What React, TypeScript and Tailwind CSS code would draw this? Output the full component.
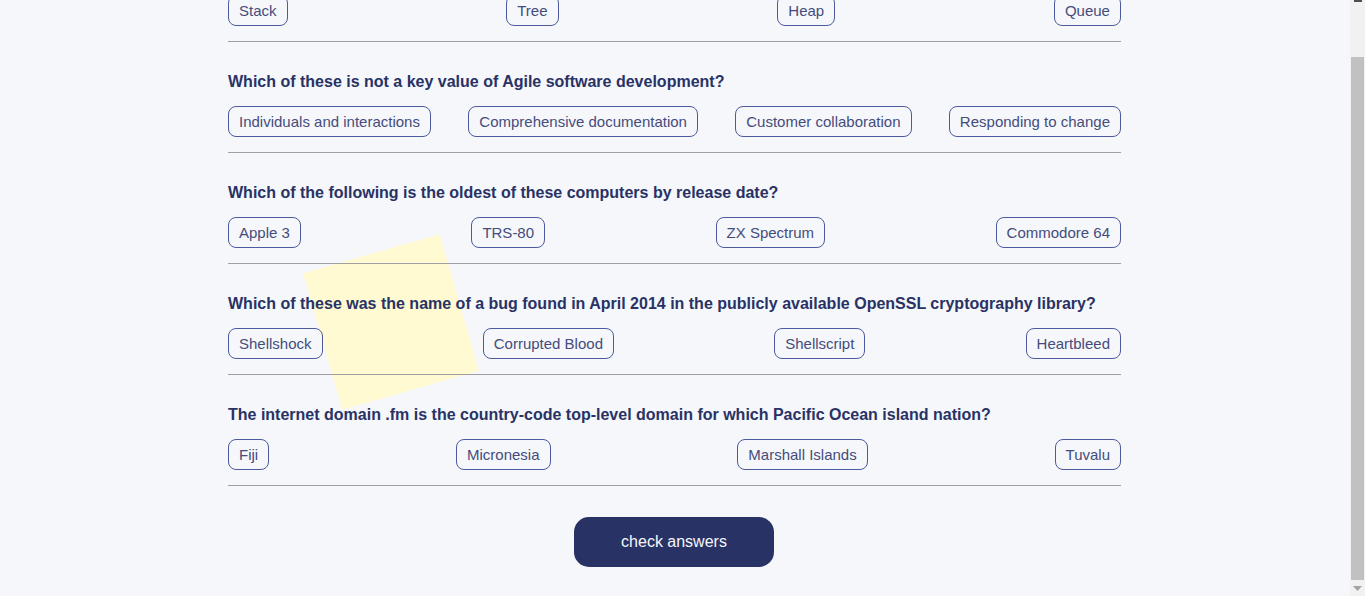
import { useLayoutEffect, useRef } from 'react'

type Question = {
  question: string
  answers: string[]
}

const questions: Question[] = [
  {
    question: 'Which data structure follows the Last In, First Out principle?',
    answers: ['Stack', 'Tree', 'Heap', 'Queue'],
  },
  {
    question: 'Which of these is not a key value of Agile software development?',
    answers: [
      'Individuals and interactions',
      'Comprehensive documentation',
      'Customer collaboration',
      'Responding to change',
    ],
  },
  {
    question: 'Which of the following is the oldest of these computers by release date?',
    answers: ['Apple 3', 'TRS-80', 'ZX Spectrum', 'Commodore 64'],
  },
  {
    question:
      'Which of these was the name of a bug found in April 2014 in the publicly available OpenSSL cryptography library?',
    answers: ['Shellshock', 'Corrupted Blood', 'Shellscript', 'Heartbleed'],
  },
  {
    question:
      'The internet domain .fm is the country-code top-level domain for which Pacific Ocean island nation?',
    answers: ['Fiji', 'Micronesia', 'Marshall Islands', 'Tuvalu'],
  },
]

function QuestionBlock({ q, first }: { q: Question; first: boolean }) {
  return (
    <div className={`border-b border-[#a0a0a4] pb-[15px] ${first ? 'pt-0' : 'pt-[31px]'}`}>
      <h2 className="text-[16px] leading-[18px] font-bold text-[#293264]">{q.question}</h2>
      <div className="mt-[15px] flex items-center justify-between">
        {q.answers.map((a) => (
          <button
            key={a}
            className="rounded-[8px] border border-[#4D5B9E] px-[10px] py-[6px] text-[15px] leading-[17px] text-[#454c7c]"
          >
            {a}
          </button>
        ))}
      </div>
    </div>
  )
}

// page scrollbar, scrolled to the end
function Scrollbar() {
  return (
    <div className="flex h-full w-[15px] shrink-0 flex-col bg-[#f1f1f1]">
      <div className="flex h-[17px] justify-center">
        <div className="h-[2px] w-[8px] bg-[#505050]" />
      </div>
      <div className="flex-1 pt-[40px] pl-[1px] pr-[1px]">
        <div className="h-[523px] bg-[#c1c1c1]" />
      </div>
      <div className="flex h-[16px] items-center justify-center">
        <svg width="9" height="5" viewBox="0 0 9 5">
          <path d="M0 0h9L4.5 5z" fill="#a3a3a3" />
        </svg>
      </div>
    </div>
  )
}

export default function App() {
  const scrollRef = useRef<HTMLDivElement>(null)

  useLayoutEffect(() => {
    const el = scrollRef.current
    if (el) el.scrollTop = el.scrollHeight
  }, [])

  return (
    <div
      className="relative flex h-[596px] w-full overflow-hidden bg-[#F5F7FB]"
      style={{ fontFamily: '"Liberation Sans", Arial, sans-serif' }}
    >
      {/* decorative blob */}
      <div className="absolute left-[320px] top-[251px] h-[142px] w-[142px] -rotate-[16deg] bg-[#FFFAD1]" />

      <div ref={scrollRef} className="relative h-full flex-1 overflow-hidden">
        <div className="ml-[228px] w-[893px] pt-[6px] pb-[29px]">
          {questions.map((q, i) => (
            <QuestionBlock key={q.question} q={q} first={i === 0} />
          ))}
          <div className="mt-[31px] flex justify-center pr-[1px]">
            <button className="h-[50px] w-[200px] rounded-[15px] bg-[#293264] text-[16px] text-[#F5F7FB]">
              check answers
            </button>
          </div>
        </div>
      </div>
      <Scrollbar />
    </div>
  )
}
